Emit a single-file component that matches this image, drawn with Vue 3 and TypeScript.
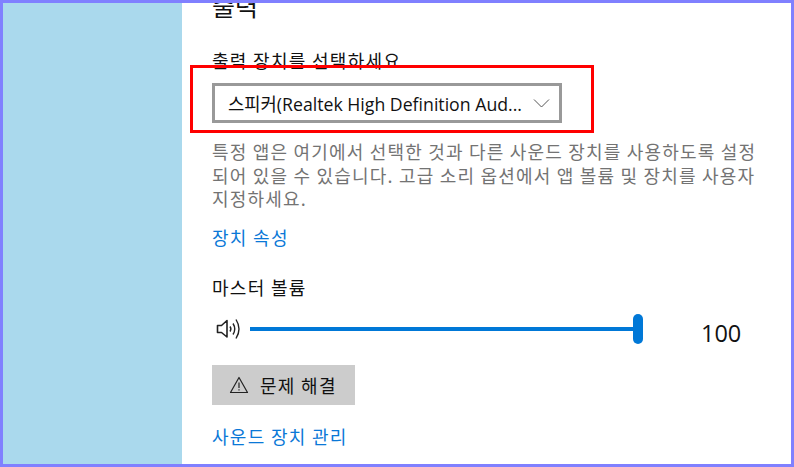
<template>
  <div class="frame">
    <div class="wallpaper"></div>
    <div class="panel">
      <h2 class="title">출력</h2>
      <div class="label">출력 장치를 선택하세요.</div>
      <div class="select">
        <span class="select-text">스피커(Realtek High Definition Aud...</span>
        <svg class="chevron" width="17" height="11" viewBox="0 0 17 11">
          <path d="M1 1.5 L8.5 9 L16 1.5" fill="none" stroke="#555" stroke-width="1" />
        </svg>
      </div>
      <p class="desc">특정 앱은 여기에서 선택한 것과 다른 사운드 장치를 사용하도록 설정 되어 있을 수 있습니다. 고급 소리 옵션에서 앱 볼륨 및 장치를 사용자 지정하세요.</p>
      <a class="link props">장치 속성</a>
      <div class="label master">마스터 볼륨</div>
      <div class="volume">
        <svg class="speaker" width="27" height="24" viewBox="0 0 27 24">
          <path d="M1.5 8.5 H5.5 L11 3.5 V20 L5.5 15.5 H1.5 Z" fill="none" stroke="#222" stroke-width="1.6" stroke-linejoin="round" />
          <path d="M14 9.5 Q15.8 12 14 14.5" fill="none" stroke="#222" stroke-width="1.4" />
          <path d="M17 6.5 Q20.5 12 17 17.5" fill="none" stroke="#222" stroke-width="1.4" />
          <path d="M20 2.5 Q26 12 20 21.5" fill="none" stroke="#222" stroke-width="1.4" />
        </svg>
        <div class="track">
          <div class="fill" :style="{ width: volume + '%' }"></div>
          <div class="thumb"></div>
        </div>
        <span class="value">{{ volume }}</span>
      </div>
      <button class="fix">
        <svg width="20" height="18" viewBox="0 0 20 18">
          <path d="M10 1.5 L18.5 16.5 H1.5 Z" fill="none" stroke="#222" stroke-width="1.2" stroke-linejoin="round" />
          <path d="M10 6.5 V12 M10 13.2 V14.6" fill="none" stroke="#222" stroke-width="1.2" />
        </svg>
        <span>문제 해결</span>
      </button>
      <a class="link manage">사운드 장치 관리</a>
    </div>
    <div class="highlight"></div>
  </div>
</template>

<script setup lang="ts">
import { ref } from 'vue'

const volume = ref(100)
</script>

<style scoped>
.frame {
  position: relative;
  box-sizing: border-box;
  width: 794px;
  height: 467px;
  border: 3px solid #8080ff;
  display: flex;
  overflow: hidden;
  background: #fff;
  font-family: "Noto Sans CJK KR", "Open Sans", sans-serif;
  color: #111;
}

.wallpaper {
  width: 179px;
  flex: none;
  background: #aad9ed;
}

.panel {
  flex: 1;
  padding-left: 30px;
  min-width: 0;
}

.title {
  margin: -15px 0 0;
  font-size: 25px;
  line-height: 34px;
  font-weight: 400;
}

.label {
  font-size: 18px;
  line-height: 24px;
  letter-spacing: 1.3px;
}

.title + .label {
  margin-top: 26px;
}

.select {
  box-sizing: border-box;
  width: 350px;
  height: 40px;
  margin-top: 11px;
  border: 3px solid #999;
  display: flex;
  align-items: center;
  justify-content: space-between;
  padding: 0 9px 0 13px;
}

.select-text {
  font-size: 17.7px;
  white-space: nowrap;
  font-family: "Open Sans", "Noto Sans CJK KR", sans-serif;
}

.desc {
  width: 550px;
  margin: 17px 0 0;
  font-size: 18px;
  line-height: 23.5px;
  letter-spacing: 1.2px;
  color: #737373;
}

.link {
  display: block;
  color: #0a78d7;
  font-size: 18px;
  line-height: 24px;
  letter-spacing: 1.3px;
}

.props {
  margin-top: 14px;
}

.master {
  margin-top: 26px;
}

.volume {
  display: flex;
  align-items: center;
  margin-top: 14px;
  height: 32px;
}

.speaker {
  flex: none;
  margin-left: 4px;
  margin-right: 7px;
}

.track {
  position: relative;
  width: 392px;
  height: 4px;
  flex: none;
}

.fill {
  height: 100%;
  background: #0078d7;
}

.thumb {
  position: absolute;
  right: -1px;
  top: -13px;
  width: 10px;
  height: 30px;
  border-radius: 5px;
  background: #0078d7;
}

.value {
  margin-left: 59px;
  font-size: 23.5px;
  line-height: 32px;
  padding-top: 9px;
  font-family: "Open Sans", sans-serif;
}

.fix {
  display: flex;
  align-items: center;
  gap: 11px;
  width: 143px;
  height: 40px;
  margin-top: 20px;
  padding: 0 0 0 17px;
  border: 0;
  background: #ccc;
  color: #111;
  font-family: inherit;
  font-size: 18px;
  letter-spacing: 1.3px;
}

.manage {
  margin-top: 19px;
}

.highlight {
  position: absolute;
  left: 187px;
  top: 62px;
  width: 404px;
  height: 68px;
  box-sizing: border-box;
  border: 3px solid #f00;
  pointer-events: none;
}
</style>
